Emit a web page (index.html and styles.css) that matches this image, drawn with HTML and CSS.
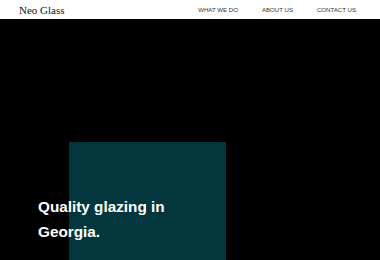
FILE: index.html
```html
<!DOCTYPE html>
<html lang="en">
<head>
    <meta charset="UTF-8">
    <meta name="viewport" content="width=device-width, initial-scale=1.0">
    <title>Neo Glass</title>
    <link rel="stylesheet" href="styles.css">
</head>
<body>
    <!-- Top bar -->
    <header class="topbar">
        <div class="brand">Neo Glass</div>
        <nav class="nav">
            <a href="#">WHAT WE DO</a>
            <a href="#">ABOUT US</a>
            <a href="#">CONTACT US</a>
        </nav>
    </header>

    <!-- Hero -->
    <section class="hero">
        <div class="hero-panel"></div>
        <h1 class="hero-title">Quality glazing in<br>Georgia.</h1>
    </section>
</body>
</html>
```

FILE: styles.css
```css
body {
    margin: 0;
    font-family: "Liberation Sans", Arial, sans-serif;
    background-color: #000;
}

.topbar {
    height: 19px;
    background: #fff;
    display: flex;
    align-items: center;
    justify-content: space-between;
    padding: 0 24px 0 19px;
}

.brand {
    font-family: "Liberation Serif", "Times New Roman", serif;
    font-size: 11px;
    color: #111;
}

.nav {
    display: flex;
    gap: 24px;
}

.nav a {
    font-size: 6.1px;
    color: #333;
    text-decoration: none;
}

.hero {
    position: relative;
    height: 241px;
    padding-top: 123px;
    padding-left: 69px;
    box-sizing: border-box;
    overflow: hidden;
}

.hero-panel {
    width: 157px;
    height: 200px;
    background: #03363d;
}

.hero-title {
    position: absolute;
    top: 175px;
    left: 38px;
    margin: 0;
    color: #fff;
    font-size: 15.3px;
    font-weight: bold;
    line-height: 25px;
}
```
